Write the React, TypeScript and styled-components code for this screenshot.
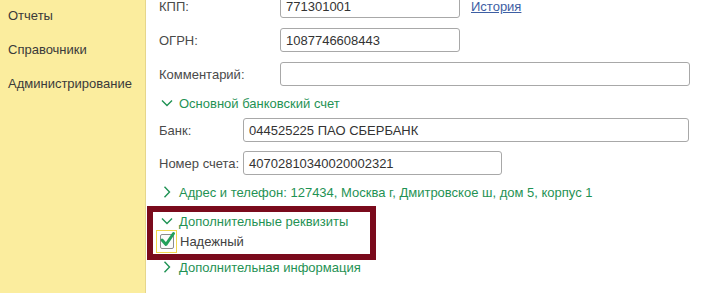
import { FC } from 'react';
import styled, { createGlobalStyle } from 'styled-components';

const Global = createGlobalStyle`
  html, body {
    margin: 0;
    padding: 0;
    background: #ffffff;
    overflow: hidden;
  }
  body {
    font-family: Arial, "Liberation Sans", sans-serif;
    font-size: 13px;
  }
`;

const Page = styled.div`
  display: flex;
  width: 711px;
  height: 293px;
  overflow: hidden;
`;

const Sidebar = styled.nav`
  width: 146px;
  flex-shrink: 0;
  background: #fbed9e;
  border-right: 1px solid #e6d68c;
  display: flex;
  flex-direction: column;
  gap: 16px;
  padding: 7px 0 0 8px;
  box-sizing: border-box;
`;

const NavItem = styled.div`
  color: #3a3a3a;
  line-height: 18px;
`;

const Main = styled.div`
  flex: 1;
  padding-left: 13px;
  margin-top: -6px;
  display: flex;
  flex-direction: column;
`;

const FieldGrid = styled.div<{ $labelWidth: number; $gap: number }>`
  display: grid;
  grid-template-columns: ${(p) => p.$labelWidth}px auto;
  row-gap: ${(p) => p.$gap}px;
  align-items: center;
`;

const Label = styled.span`
  color: #4a4a4a;
  white-space: nowrap;
`;

const InputRow = styled.div`
  display: flex;
  align-items: center;
  gap: 11px;
`;

const Input = styled.div<{ $width: number }>`
  width: ${(p) => p.$width}px;
  height: 24px;
  box-sizing: border-box;
  border: 1px solid #a8a8a8;
  border-radius: 3px;
  padding: 0 5px;
  display: flex;
  align-items: center;
  color: #333333;
  font-size: 13px;
  white-space: nowrap;
  background: #fff;
`;

const HistoryLink = styled.a`
  color: #3d5ea3;
  text-decoration: underline;
  cursor: pointer;
`;

const GroupHeader = styled.div<{ $mt?: number; $mb?: number }>`
  display: flex;
  align-items: center;
  height: 18px;
  margin-top: ${(p) => p.$mt ?? 0}px;
  margin-bottom: ${(p) => p.$mb ?? 0}px;
  color: #1f9254;
  white-space: nowrap;
`;

const ChevronBox = styled.span`
  width: 20px;
  padding-left: 2px;
  box-sizing: border-box;
  display: flex;
  align-items: center;
`;

const Frame = styled.div`
  width: 229px;
  height: 54px;
  box-sizing: border-box;
  margin: 5px 0 0 -12px;
  border: 6px solid #7a0a1c;
  padding: 0 0 0 6px;
  display: flex;
  flex-direction: column;
`;

const CheckRow = styled.label`
  display: flex;
  align-items: center;
  gap: 3px;
  margin-left: -3px;
  margin-top: -1px;
  height: 24px;
  color: #404040;
`;

const CheckFocus = styled.span`
  width: 21px;
  height: 23px;
  box-sizing: border-box;
  border: 1px solid #f0d64e;
  display: flex;
  align-items: center;
  justify-content: center;
  position: relative;
`;

const CheckSquare = styled.span`
  width: 14px;
  height: 15px;
  box-sizing: border-box;
  border: 1px solid #8c8c8c;
  border-radius: 2px;
  background: #fafafa;
`;

const CheckMark = styled.svg`
  position: absolute;
  left: 2px;
  top: 0;
`;

const Chevron: FC<{ open?: boolean }> = ({ open }) =>
  open ? (
    <svg width="12" height="8" viewBox="0 0 12 8">
      <path d="M1 1.5 L6 6.5 L11 1.5" fill="none" stroke="#1f9254" strokeWidth="1.4" />
    </svg>
  ) : (
    <svg width="12" height="12" viewBox="0 0 12 12">
      <path d="M3.5 0.8 L8.5 6 L3.5 11.2" fill="none" stroke="#1f9254" strokeWidth="1.4" />
    </svg>
  );

const Group: FC<{ title: string; open?: boolean; mt?: number; mb?: number }> = ({ title, open, mt, mb }) => (
  <GroupHeader $mt={mt} $mb={mb}>
    <ChevronBox>
      <Chevron open={open} />
    </ChevronBox>
    {title}
  </GroupHeader>
);

export default function App() {
  return (
    <>
      <Global />
      <Page>
        <Sidebar>
          <NavItem>Отчеты</NavItem>
          <NavItem>Справочники</NavItem>
          <NavItem>Администрирование</NavItem>
        </Sidebar>
        <Main>
          <FieldGrid $labelWidth={121} $gap={10}>
            <Label>КПП:</Label>
            <InputRow>
              <Input $width={180}>771301001</Input>
              <HistoryLink>История</HistoryLink>
            </InputRow>
            <Label>ОГРН:</Label>
            <Input $width={180}>1087746608443</Input>
            <Label>Комментарий:</Label>
            <Input $width={410}></Input>
          </FieldGrid>

          <Group title="Основной банковский счет" open mt={8} mb={6} />

          <FieldGrid $labelWidth={84} $gap={9}>
            <Label>Банк:</Label>
            <Input $width={446}>044525225 ПАО СБЕРБАНК</Input>
            <Label>Номер счета:</Label>
            <Input $width={259}>40702810340020002321</Input>
          </FieldGrid>

          <Group title="Адрес и телефон: 127434, Москва г, Дмитровское ш, дом 5, корпус 1" mt={8} />

          <Frame>
            <Group title="Дополнительные реквизиты" open />
            <CheckRow>
              <CheckFocus>
                <CheckSquare />
                <CheckMark width="17" height="17" viewBox="0 0 17 17">
                  <path d="M3 9 L7 13.5 L14.5 2.5" fill="none" stroke="#22a05a" strokeWidth="3" strokeLinecap="round" strokeLinejoin="round" />
                </CheckMark>
              </CheckFocus>
              Надежный
            </CheckRow>
          </Frame>

          <Group title="Дополнительная информация" mt={-2} />
        </Main>
      </Page>
    </>
  );
}
